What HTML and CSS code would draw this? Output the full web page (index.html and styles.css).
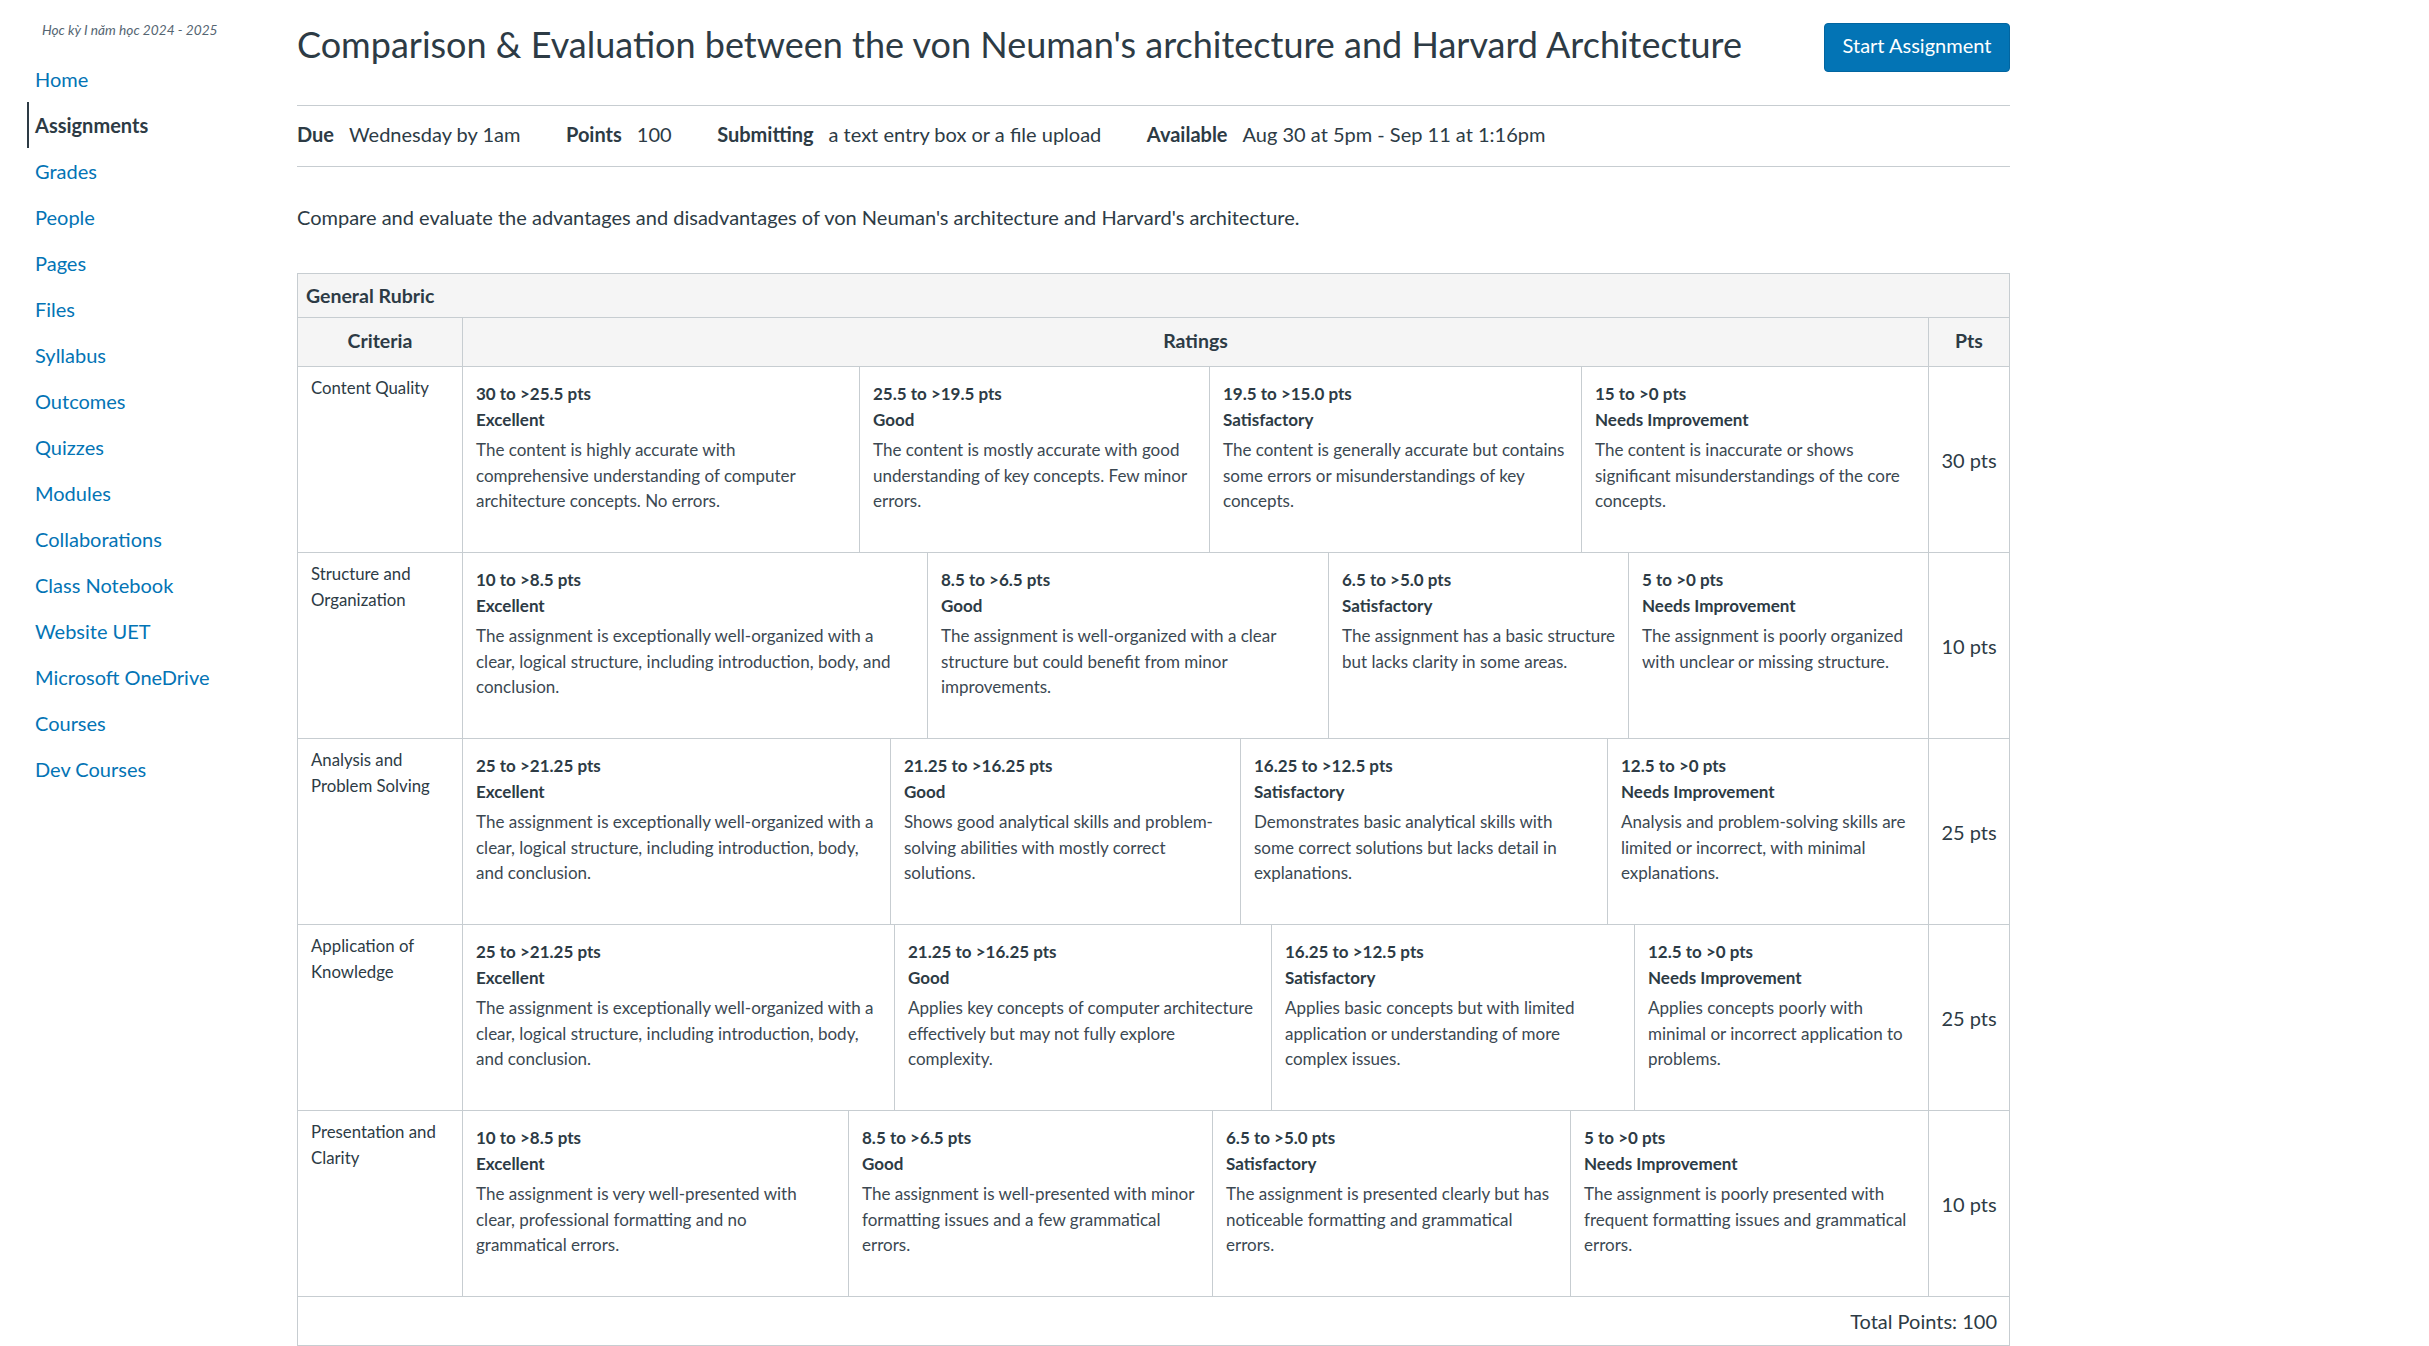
FILE: index.html
```html
<!DOCTYPE html>
<html lang="vi">
<head>
<meta charset="utf-8">
<title>Comparison &amp; Evaluation</title>
<link rel="stylesheet" href="styles.css">
</head>
<body>
<div class="layout">
  <nav class="sidebar">
    <div class="term">Học kỳ I năm học 2024 - 2025</div>
    <ul class="nav">
      <li><a class="nav-link" href="#">Home</a></li>
      <li><a class="nav-link active" href="#">Assignments</a></li>
      <li><a class="nav-link" href="#">Grades</a></li>
      <li><a class="nav-link" href="#">People</a></li>
      <li><a class="nav-link" href="#">Pages</a></li>
      <li><a class="nav-link" href="#">Files</a></li>
      <li><a class="nav-link" href="#">Syllabus</a></li>
      <li><a class="nav-link" href="#">Outcomes</a></li>
      <li><a class="nav-link" href="#">Quizzes</a></li>
      <li><a class="nav-link" href="#">Modules</a></li>
      <li><a class="nav-link" href="#">Collaborations</a></li>
      <li><a class="nav-link" href="#">Class Notebook</a></li>
      <li><a class="nav-link" href="#">Website UET</a></li>
      <li><a class="nav-link" href="#">Microsoft OneDrive</a></li>
      <li><a class="nav-link" href="#">Courses</a></li>
      <li><a class="nav-link" href="#">Dev Courses</a></li>
    </ul>
  </nav>

  <main class="content">
    <div class="page-header">
      <h1 class="title">Comparison &amp; Evaluation between the von Neuman's architecture and Harvard Architecture</h1>
      <a class="btn-primary" href="#">Start Assignment</a>
    </div>

    <ul class="details">
      <li class="detail"><span class="detail-label">Due</span><span class="detail-value">Wednesday by 1am</span></li>
      <li class="detail"><span class="detail-label">Points</span><span class="detail-value">100</span></li>
      <li class="detail"><span class="detail-label">Submitting</span><span class="detail-value">a text entry box or a file upload</span></li>
      <li class="detail"><span class="detail-label">Available</span><span class="detail-value">Aug 30 at 5pm - Sep 11 at 1:16pm</span></li>
    </ul>

    <p class="description">Compare and evaluate the advantages and disadvantages of von Neuman's architecture and Harvard's architecture.</p>

    <section class="rubric">
      <div class="rubric-title">General Rubric</div>
      <div class="rubric-head">
        <div class="head-cell col-criteria">Criteria</div>
        <div class="head-cell col-ratings">Ratings</div>
        <div class="head-cell col-pts">Pts</div>
      </div>

      <div class="rubric-row">
        <div class="criterion col-criteria">Content Quality</div>
        <div class="ratings col-ratings ratings-1">
          <div class="rating">
            <div class="rating-pts">30 to &gt;25.5 pts</div>
            <div class="rating-name">Excellent</div>
            <div class="rating-desc">The content is highly accurate with comprehensive understanding of computer architecture concepts. No errors.</div>
          </div>
          <div class="rating">
            <div class="rating-pts">25.5 to &gt;19.5 pts</div>
            <div class="rating-name">Good</div>
            <div class="rating-desc">The content is mostly accurate with good understanding of key concepts. Few minor errors.</div>
          </div>
          <div class="rating">
            <div class="rating-pts">19.5 to &gt;15.0 pts</div>
            <div class="rating-name">Satisfactory</div>
            <div class="rating-desc">The content is generally accurate but contains some errors or misunderstandings of key concepts.</div>
          </div>
          <div class="rating">
            <div class="rating-pts">15 to &gt;0 pts</div>
            <div class="rating-name">Needs Improvement</div>
            <div class="rating-desc">The content is inaccurate or shows significant misunderstandings of the core concepts.</div>
          </div>
        </div>
        <div class="points col-pts">30 pts</div>
      </div>

      <div class="rubric-row">
        <div class="criterion col-criteria">Structure and Organization</div>
        <div class="ratings col-ratings ratings-2">
          <div class="rating">
            <div class="rating-pts">10 to &gt;8.5 pts</div>
            <div class="rating-name">Excellent</div>
            <div class="rating-desc">The assignment is exceptionally well-organized with a clear, logical structure, including introduction, body, and conclusion.</div>
          </div>
          <div class="rating">
            <div class="rating-pts">8.5 to &gt;6.5 pts</div>
            <div class="rating-name">Good</div>
            <div class="rating-desc">The assignment is well-organized with a clear structure but could benefit from minor improvements.</div>
          </div>
          <div class="rating">
            <div class="rating-pts">6.5 to &gt;5.0 pts</div>
            <div class="rating-name">Satisfactory</div>
            <div class="rating-desc">The assignment has a basic structure but lacks clarity in some areas.</div>
          </div>
          <div class="rating">
            <div class="rating-pts">5 to &gt;0 pts</div>
            <div class="rating-name">Needs Improvement</div>
            <div class="rating-desc">The assignment is poorly organized with unclear or missing structure.</div>
          </div>
        </div>
        <div class="points col-pts">10 pts</div>
      </div>

      <div class="rubric-row">
        <div class="criterion col-criteria">Analysis and Problem Solving</div>
        <div class="ratings col-ratings ratings-3">
          <div class="rating">
            <div class="rating-pts">25 to &gt;21.25 pts</div>
            <div class="rating-name">Excellent</div>
            <div class="rating-desc">The assignment is exceptionally well-organized with a clear, logical structure, including introduction, body, and conclusion.</div>
          </div>
          <div class="rating">
            <div class="rating-pts">21.25 to &gt;16.25 pts</div>
            <div class="rating-name">Good</div>
            <div class="rating-desc">Shows good analytical skills and problem-solving abilities with mostly correct solutions.</div>
          </div>
          <div class="rating">
            <div class="rating-pts">16.25 to &gt;12.5 pts</div>
            <div class="rating-name">Satisfactory</div>
            <div class="rating-desc">Demonstrates basic analytical skills with some correct solutions but lacks detail in explanations.</div>
          </div>
          <div class="rating">
            <div class="rating-pts">12.5 to &gt;0 pts</div>
            <div class="rating-name">Needs Improvement</div>
            <div class="rating-desc">Analysis and problem-solving skills are limited or incorrect, with minimal explanations.</div>
          </div>
        </div>
        <div class="points col-pts">25 pts</div>
      </div>

      <div class="rubric-row">
        <div class="criterion col-criteria">Application of Knowledge</div>
        <div class="ratings col-ratings ratings-4">
          <div class="rating">
            <div class="rating-pts">25 to &gt;21.25 pts</div>
            <div class="rating-name">Excellent</div>
            <div class="rating-desc">The assignment is exceptionally well-organized with a clear, logical structure, including introduction, body, and conclusion.</div>
          </div>
          <div class="rating">
            <div class="rating-pts">21.25 to &gt;16.25 pts</div>
            <div class="rating-name">Good</div>
            <div class="rating-desc">Applies key concepts of computer architecture effectively but may not fully explore complexity.</div>
          </div>
          <div class="rating">
            <div class="rating-pts">16.25 to &gt;12.5 pts</div>
            <div class="rating-name">Satisfactory</div>
            <div class="rating-desc">Applies basic concepts but with limited application or understanding of more complex issues.</div>
          </div>
          <div class="rating">
            <div class="rating-pts">12.5 to &gt;0 pts</div>
            <div class="rating-name">Needs Improvement</div>
            <div class="rating-desc">Applies concepts poorly with minimal or incorrect application to problems.</div>
          </div>
        </div>
        <div class="points col-pts">25 pts</div>
      </div>

      <div class="rubric-row">
        <div class="criterion col-criteria">Presentation and Clarity</div>
        <div class="ratings col-ratings ratings-5">
          <div class="rating">
            <div class="rating-pts">10 to &gt;8.5 pts</div>
            <div class="rating-name">Excellent</div>
            <div class="rating-desc">The assignment is very well-presented with clear, professional formatting and no grammatical errors.</div>
          </div>
          <div class="rating">
            <div class="rating-pts">8.5 to &gt;6.5 pts</div>
            <div class="rating-name">Good</div>
            <div class="rating-desc">The assignment is well-presented with minor formatting issues and a few grammatical errors.</div>
          </div>
          <div class="rating">
            <div class="rating-pts">6.5 to &gt;5.0 pts</div>
            <div class="rating-name">Satisfactory</div>
            <div class="rating-desc">The assignment is presented clearly but has noticeable formatting and grammatical errors.</div>
          </div>
          <div class="rating">
            <div class="rating-pts">5 to &gt;0 pts</div>
            <div class="rating-name">Needs Improvement</div>
            <div class="rating-desc">The assignment is poorly presented with frequent formatting issues and grammatical errors.</div>
          </div>
        </div>
        <div class="points col-pts">10 pts</div>
      </div>

      <div class="rubric-total">Total Points: 100</div>
    </section>
  </main>
</div>
</body>
</html>
```

FILE: styles.css
```css
* {
  box-sizing: border-box;
}

html, body {
  margin: 0;
  padding: 0;
  background: #ffffff;
}

body {
  font-family: Lato, "Open Sans", "Liberation Sans", sans-serif;
  color: #2D3B45;
}

.layout {
  display: flex;
  align-items: flex-start;
}

/* ---------- Sidebar ---------- */
.sidebar {
  width: 297px;
  flex: 0 0 297px;
  padding-top: 20px;
}

.term {
  padding-left: 42px;
  font-size: 13.7px;
  line-height: 20px;
  font-style: italic;
  color: #556572;
}

.nav {
  list-style: none;
  margin: 16px 0 0 27px;
  padding: 0;
}

.nav-link {
  display: block;
  height: 46px;
  line-height: 46px;
  padding-left: 6px;
  border-left: 2px solid transparent;
  font-size: 20px;
  color: #0374B5;
  text-decoration: none;
  white-space: nowrap;
}

.nav-link.active {
  border-left-color: #2D3B45;
  color: #2D3B45;
  font-weight: 700;
}

/* ---------- Content ---------- */
.content {
  width: 1713px;
  flex: 0 0 1713px;
  padding-top: 23px;
}

.page-header {
  display: flex;
  justify-content: space-between;
  align-items: flex-start;
}

.title {
  margin: 0;
  font-size: 36px;
  line-height: 43px;
  font-weight: 400;
  color: #2D3B45;
}

.btn-primary {
  display: block;
  width: 186px;
  height: 49px;
  padding-bottom: 4px;
  line-height: 43px;
  text-align: center;
  font-size: 20px;
  color: #ffffff;
  background: #0374B5;
  border: 1px solid #0265A0;
  border-radius: 4px;
  text-decoration: none;
}

.details {
  list-style: none;
  margin: 33px 0 0 0;
  padding: 0 0 5px 0;
  height: 62px;
  display: flex;
  align-items: center;
  gap: 45.5px;
  border-top: 1px solid #C7CDD1;
  border-bottom: 1px solid #C7CDD1;
  font-size: 20px;
}

.detail-label {
  font-weight: 700;
}

.detail-value {
  margin-left: 15px;
}

.description {
  margin: 35px 0 0 0;
  font-size: 20px;
  line-height: 30px;
}

/* ---------- Rubric ---------- */
.rubric {
  margin-top: 41px;
  border: 1px solid #C7CDD1;
}

.rubric-title {
  height: 44px;
  padding: 0 8px;
  display: flex;
  align-items: center;
  background: #F5F5F5;
  border-bottom: 1px solid #C7CDD1;
  font-size: 19.5px;
  font-weight: 700;
}

.rubric-head,
.rubric-row {
  display: grid;
  grid-template-columns: 165px 1466px 80px;
  border-bottom: 1px solid #C7CDD1;
}

.rubric-head {
  height: 49px;
  background: #F5F5F5;
}

.rubric-row {
  height: 186px;
}

.col-criteria,
.col-ratings {
  border-right: 1px solid #C7CDD1;
}

.head-cell {
  display: flex;
  align-items: center;
  justify-content: center;
  padding-bottom: 3px;
  font-size: 19.5px;
  font-weight: 700;
}

.criterion {
  padding: 8px 13px;
  font-size: 16.8px;
  line-height: 26px;
}

.ratings {
  display: grid;
}

.ratings-1 { grid-template-columns: 396px 350px 372px 1fr; }
.ratings-2 { grid-template-columns: 464px 401px 300px 1fr; }
.ratings-3 { grid-template-columns: 427px 350px 367px 1fr; }
.ratings-4 { grid-template-columns: 431px 377px 363px 1fr; }
.ratings-5 { grid-template-columns: 385px 364px 358px 1fr; }

.rating {
  padding: 14px 13px 0 13px;
  font-size: 17px;
  line-height: 25.5px;
}

.rating + .rating {
  border-left: 1px solid #C7CDD1;
}

.rating-pts,
.rating-name {
  font-weight: 700;
}

.rating-desc {
  margin-top: 5px;
  color: #3B4852;
}

.points {
  display: flex;
  align-items: center;
  justify-content: center;
  font-size: 20px;
}

.rubric-total {
  height: 48px;
  padding-right: 12px;
  display: flex;
  align-items: center;
  justify-content: flex-end;
  font-size: 20px;
}
```
